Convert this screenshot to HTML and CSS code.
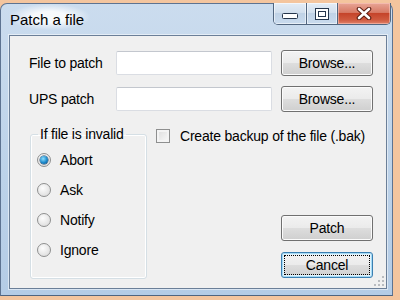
FILE: index.html
```html
<!DOCTYPE html>
<html lang="en">
<head>
    <meta charset="UTF-8">
    <title>Patch a file</title>
    <link rel="stylesheet" href="styles.css">
</head>
<body>
    <div class="window">
        <!-- Barra de titulo -->
        <div class="titlebar">
            <span class="title">Patch a file</span>
            <div class="caption-buttons">
                <span class="cap cap-min">
                    <svg width="16" height="7" viewBox="0 0 16 7"><rect x="0.5" y="0.5" width="15" height="5" rx="1" fill="#fff" stroke="#26364c"/></svg>
                </span>
                <span class="cap cap-max">
                    <svg width="14" height="12" viewBox="0 0 14 12"><rect x="0.5" y="0.5" width="13" height="11" fill="#fff" stroke="#26364c"/><rect x="3.5" y="3.5" width="7" height="5" fill="none" stroke="#26364c"/></svg>
                </span>
                <span class="cap cap-close">
                    <svg width="16" height="13" viewBox="0 0 16 13"><path d="M3 2 L13 11 M13 2 L3 11" stroke="#5b1d12" stroke-width="4.6" stroke-linecap="round"/><path d="M3 2 L13 11 M13 2 L3 11" stroke="#fff" stroke-width="2.6" stroke-linecap="round"/></svg>
                </span>
            </div>
        </div>

        <div class="client">
            <div class="field-row">
                <label class="field-label">File to patch</label>
                <input class="textbox" type="text">
                <button class="btn">Browse...</button>
            </div>
            <div class="field-row second">
                <label class="field-label">UPS patch</label>
                <input class="textbox" type="text">
                <button class="btn">Browse...</button>
            </div>

            <div class="lower">
                <fieldset class="group">
                    <legend>If file is invalid</legend>
                    <label class="radio"><span class="radio-dot checked"></span>Abort</label>
                    <label class="radio"><span class="radio-dot"></span>Ask</label>
                    <label class="radio"><span class="radio-dot"></span>Notify</label>
                    <label class="radio"><span class="radio-dot"></span>Ignore</label>
                </fieldset>
                <div class="side">
                    <label class="check"><span class="check-box"></span>Create backup of the file (.bak)</label>
                    <div class="actions">
                        <button class="btn">Patch</button>
                        <button class="btn default">Cancel</button>
                    </div>
                </div>
            </div>

            <svg class="grip" width="11" height="11" viewBox="0 0 11 11">
                <g fill="#b9bcc0">
                    <rect x="8" y="0" width="2" height="2"/>
                    <rect x="4" y="4" width="2" height="2"/><rect x="8" y="4" width="2" height="2"/>
                    <rect x="0" y="8" width="2" height="2"/><rect x="4" y="8" width="2" height="2"/><rect x="8" y="8" width="2" height="2"/>
                </g>
            </svg>
        </div>
    </div>
</body>
</html>
```

FILE: styles.css
```css
body {
    margin: 0;
    background: #f4c59e;
    font-family: "Liberation Sans", Arial, sans-serif;
    font-size: 14px;
    letter-spacing: -0.2px;
    color: #000;
    overflow: hidden;
}

/* Janela estilo Windows 7 */
.window {
    width: 393px;
    height: 293px;
    margin-top: 3px;
    box-sizing: border-box;
    border: 1px solid #5d7391;
    border-bottom-color: #4e6480;
    border-radius: 7px 7px 0 0;
    background: linear-gradient(#cbdcee, #bcd2e9 60%, #b4cce6);
    display: flex;
    flex-direction: column;
}

.titlebar {
    height: 31px;
    display: flex;
    justify-content: space-between;
    align-items: flex-start;
    padding-left: 9px;
}

.title {
    font-size: 15px;
    line-height: 17px;
    letter-spacing: 0;
    padding: 7px 6px 2px 1px;
    margin-left: -1px;
    color: #000;
    background: radial-gradient(ellipse at center, rgba(255, 255, 255, 0.85) 30%, rgba(255, 255, 255, 0) 72%);
}

.caption-buttons {
    display: flex;
    margin-top: -1px;
    margin-right: 1px;
    height: 22px;
    box-sizing: border-box;
    border: 1px solid #52667f;
    border-top: none;
    border-radius: 0 0 5px 5px;
    overflow: hidden;
}

.cap {
    display: flex;
    align-items: center;
    justify-content: center;
    height: 100%;
    background: linear-gradient(#e3ecf6, #d3e0ee 45%, #c0d2e6 50%, #c9dbee);
    box-shadow: inset 0 0 0 1px rgba(255, 255, 255, 0.55);
}

.cap-min {
    width: 32px;
    border-right: 1px solid #52667f;
}

.cap-min svg {
    margin-top: 5px;
}

.cap-max {
    width: 30px;
    border-right: 1px solid #52667f;
}

.cap-close {
    width: 52px;
    background: linear-gradient(#e8a596, #d77b66 45%, #c5442a 50%, #cf5a3f 80%, #e0826a);
    box-shadow: inset 0 0 0 1px rgba(255, 210, 200, 0.5);
}

/* Area do cliente */
.client {
    position: relative;
    height: 254px;
    margin: 0 5px 0 8px;
    box-sizing: border-box;
    border: 1px solid #6b7f98;
    background: #f0f0f0;
    box-shadow: 0 0 0 1px rgba(255, 255, 255, 0.5);
    padding: 14px 13px 9px 19px;
    display: flex;
    flex-direction: column;
}

.field-row {
    display: flex;
    align-items: center;
    height: 26px;
}

.field-row.second {
    margin-top: 10px;
}

.field-label {
    width: 87px;
}

.textbox {
    width: 156px;
    height: 24px;
    box-sizing: border-box;
    margin: 0 9px 0 0;
    border: 1px solid #dadde3;
    border-top-color: #c3c7ce;
    border-radius: 2px;
    background: #fff;
    padding: 0 3px;
    font: inherit;
}

.btn {
    width: 92px;
    height: 26px;
    box-sizing: border-box;
    margin: 0;
    padding: 0;
    border: 1px solid #707070;
    border-radius: 3px;
    background: linear-gradient(#f3f3f3, #ebebeb 48%, #dddddd 52%, #cfcfcf);
    box-shadow: inset 0 0 0 1px #fbfbfb;
    font: inherit;
    letter-spacing: inherit;
    color: #000;
}

.btn.default {
    border-color: #3c7fb1;
    box-shadow: inset 0 0 0 1px #a5dbf6, inset 0 0 0 2px #e2f3fc;
    outline: 1px dotted #000;
    outline-offset: -4px;
}

.lower {
    flex: 1;
    display: flex;
    margin-top: 14px;
}

.group {
    width: 117px;
    box-sizing: border-box;
    margin: 0 0 0 1px;
    padding: 3px 0 0 6px;
    border: 1px solid #d5dfe5;
    border-radius: 3px;
    box-shadow: inset 0 0 0 1px #fff;
}

.group legend {
    padding: 0 2px;
    margin-left: 1px;
    line-height: 16px;
}

.radio {
    display: flex;
    align-items: center;
    height: 30px;
}

.radio-dot {
    width: 14px;
    height: 14px;
    box-sizing: border-box;
    margin-right: 9px;
    border: 1px solid #8e8f8f;
    border-radius: 50%;
    background: radial-gradient(circle at 40% 35%, #fdfdfd, #e2e2e2 70%, #d6d6d6);
    display: flex;
    align-items: center;
    justify-content: center;
}

.radio-dot.checked::after {
    content: "";
    width: 8px;
    height: 8px;
    border-radius: 50%;
    background: radial-gradient(circle at 40% 35%, #8fe0ff, #1b87c9 55%, #0c4a80);
    box-shadow: 0 0 0 0.5px #1d3c5c;
}

.side {
    flex: 1;
    margin-left: 9px;
    display: flex;
    flex-direction: column;
}

.check {
    display: flex;
    align-items: center;
    height: 17px;
    margin-top: 1px;
    white-space: nowrap;
}

.check-box {
    width: 14px;
    height: 14px;
    box-sizing: border-box;
    margin-right: 10px;
    border: 1px solid #8e8f8f;
    background: linear-gradient(135deg, #dcdcdc, #fbfbfb);
    box-shadow: inset 0 0 0 2px #f4f4f4;
}

.actions {
    margin-top: auto;
    display: flex;
    flex-direction: column;
    align-items: flex-end;
    gap: 11px;
    margin-bottom: 1px;
}

.grip {
    position: absolute;
    right: 1px;
    bottom: 1px;
}
```
